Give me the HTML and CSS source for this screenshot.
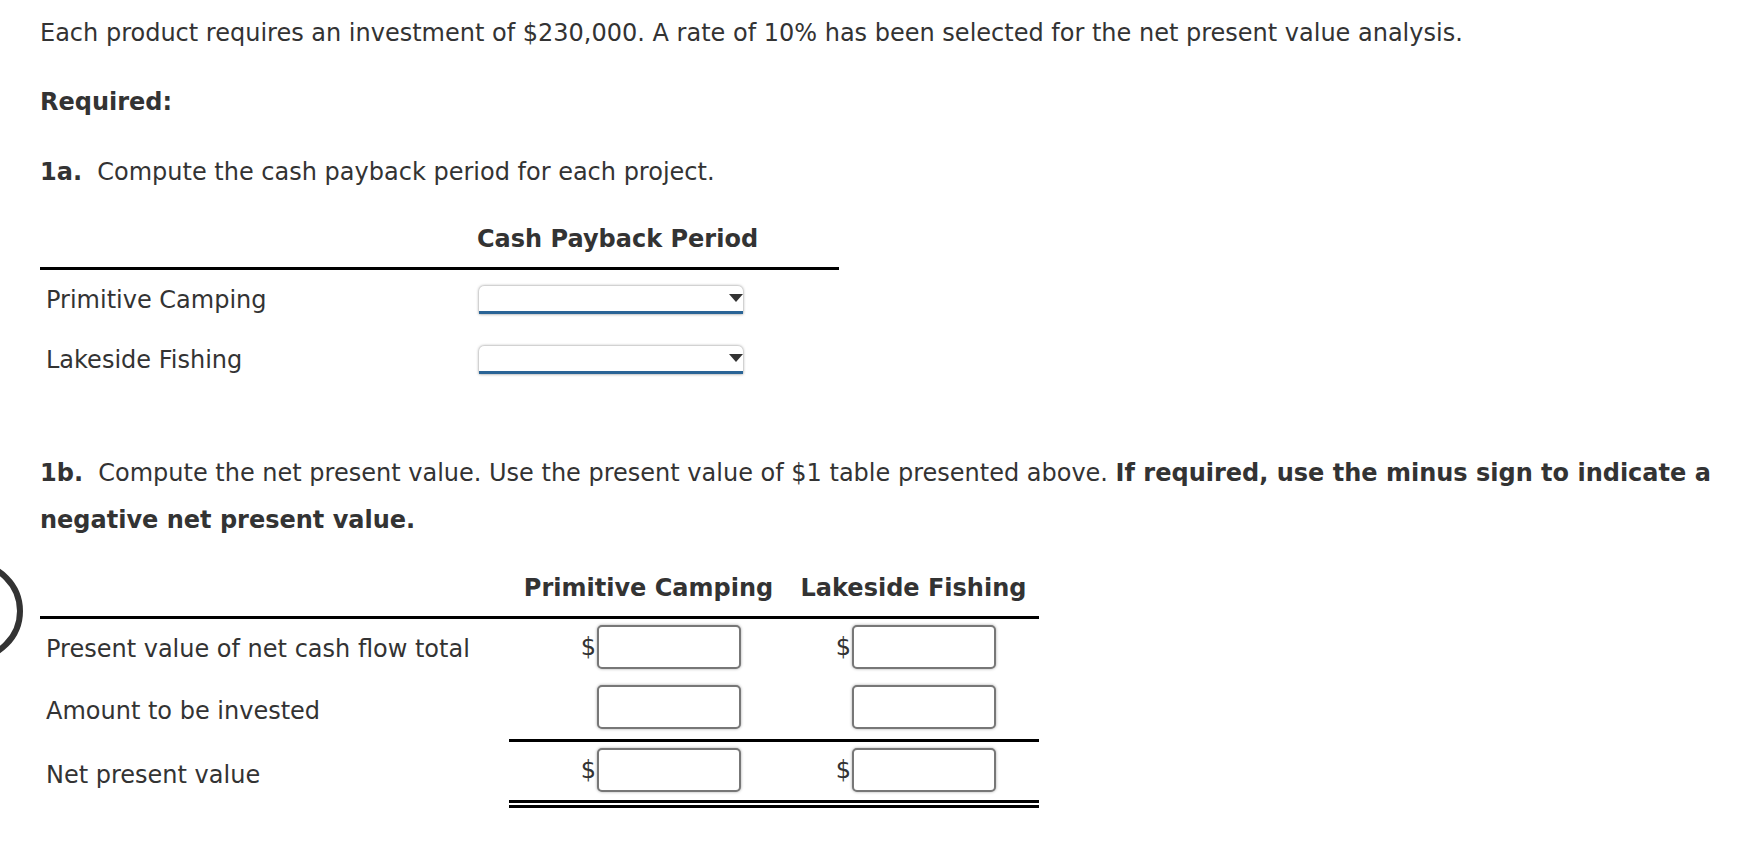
FILE: index.html
```html
<!DOCTYPE html>
<html lang="en">

<head>
    <meta charset="UTF-8">
    <title>Net Present Value</title>
    <link rel="stylesheet" href="styles.css">
</head>

<body>
    <!-- clipped widget at the left edge -->
    <svg class="edge-circle" width="40" height="120" viewBox="0 0 40 120">
        <circle cx="-27" cy="60" r="47" fill="none" stroke="#333" stroke-width="6" />
    </svg>

    <div class="question">
        <p class="text">Each product requires an investment of $230,000. A rate of 10% has been selected for the net present value analysis.</p>

        <p class="text required"><b>Required:</b></p>

        <p class="text part"><b>1a.</b>&nbsp; Compute the cash payback period for each project.</p>

        <!-- 1a table -->
        <div class="grid payback">
            <div class="head blank"></div>
            <div class="head">Cash Payback Period</div>
            <div class="head blank"></div>

            <div class="label">Primitive Camping</div>
            <div class="cell">
                <div class="select">
                    <svg class="arrow" width="14" height="8" viewBox="0 0 14 8"><path d="M0 0H14L7 8Z" fill="#333" /></svg>
                </div>
            </div>
            <div class="cell"></div>

            <div class="label">Lakeside Fishing</div>
            <div class="cell">
                <div class="select">
                    <svg class="arrow" width="14" height="8" viewBox="0 0 14 8"><path d="M0 0H14L7 8Z" fill="#333" /></svg>
                </div>
            </div>
            <div class="cell"></div>
        </div>

        <p class="text part-b"><b>1b.</b>&nbsp; Compute the net present value. Use the present value of $1 table presented above. <b>If required, use the minus sign to indicate a negative net present value.</b></p>

        <!-- 1b table -->
        <div class="grid npv">
            <div class="head blank"></div>
            <div class="head">Primitive Camping</div>
            <div class="head">Lakeside Fishing</div>

            <div class="label">Present value of net cash flow total</div>
            <div class="amount col-a"><span class="dollar">$</span><div class="input"></div></div>
            <div class="amount col-b"><span class="dollar">$</span><div class="input"></div></div>

            <div class="label">Amount to be invested</div>
            <div class="amount col-a sub"><div class="input"></div></div>
            <div class="amount col-b sub"><div class="input"></div></div>

            <div class="label">Net present value</div>
            <div class="amount col-a total"><span class="dollar">$</span><div class="input"></div></div>
            <div class="amount col-b total"><span class="dollar">$</span><div class="input"></div></div>
        </div>
    </div>
</body>

</html>
```

FILE: styles.css
```css
body {
    margin: 0;
    padding: 0;
    background: white;
    color: #333;
    font-family: "DejaVu Sans", Verdana, sans-serif;
    font-size: 24px;
    position: relative;
}

.edge-circle {
    position: absolute;
    left: 0;
    top: 551px;
}

.question {
    padding: 10px 40px 0 40px;
}

.text {
    margin: 0;
    line-height: 47px;
}

.required {
    margin-top: 22px;
}

.part {
    margin-top: 23px;
}

.part-b {
    margin-top: 60px;
    width: 1700px;
}

.grid {
    display: grid;
}

.payback {
    grid-template-columns: 437px 280px 82px;
    margin-top: 28px;
}

.npv {
    grid-template-columns: 469px 279px 251px;
    margin-top: 29px;
}

.head {
    font-weight: bold;
    line-height: 30px;
    padding-bottom: 13px;
    border-bottom: 3px solid #000;
    text-align: center;
    white-space: nowrap;
}

.label {
    display: flex;
    align-items: center;
    padding-left: 6px;
    white-space: nowrap;
}

.payback .label,
.payback .cell {
    height: 60px;
}

.cell {
    display: flex;
    align-items: center;
}

.select {
    position: relative;
    width: 264px;
    height: 25px;
    margin-left: 2px;
    background: white;
    border-bottom: 3px solid #2a6496;
    border-radius: 5px 5px 0 0;
    box-shadow: 0 0 3px rgba(0, 0, 0, 0.5);
}

.select .arrow {
    position: absolute;
    right: 0;
    top: 8px;
}

.amount {
    display: flex;
    align-items: center;
    justify-content: flex-end;
    padding: 6px 0 10px 0;
}

.col-a {
    padding-right: 47px;
}

.col-b {
    padding-right: 43px;
}

.sub {
    border-bottom: 3px solid #000;
}

.total {
    padding-bottom: 8px;
    border-bottom: 8px double #000;
}

.dollar {
    margin-right: 1px;
}

.input {
    width: 140px;
    height: 40px;
    border: 2px solid #777;
    border-radius: 5px;
    background: white;
    box-shadow: 0 0 3px rgba(0, 0, 0, 0.35);
}
```
